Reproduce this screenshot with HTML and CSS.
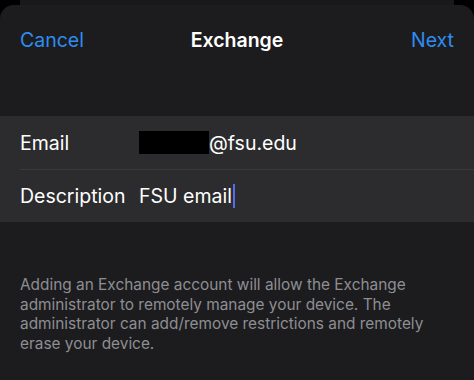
FILE: index.html
```html
<!DOCTYPE html>
<html lang="en">
<head>
    <meta charset="UTF-8">
    <meta name="viewport" content="width=device-width, initial-scale=1.0">
    <title>Exchange</title>
    <link rel="stylesheet" href="styles.css">
</head>
<body>

    <div class="behind"></div>

    <div class="sheet">
        <!-- Nav bar -->
        <div class="nav">
            <a href="#" class="nav-btn">Cancel</a>
            <h1 class="nav-title">Exchange</h1>
            <a href="#" class="nav-btn">Next</a>
        </div>

        <!-- Account fields -->
        <div class="group">
            <div class="row">
                <span class="label">Email</span>
                <span class="value"><span class="redacted"></span>@fsu.edu</span>
            </div>
            <div class="row">
                <span class="label">Description</span>
                <span class="value">FSU email<span class="cursor"></span></span>
            </div>
        </div>

        <p class="footer-note">Adding an Exchange account will allow the Exchange administrator to remotely manage your device. The administrator can add/remove restrictions and remotely erase your device.</p>
    </div>

</body>
</html>
```

FILE: styles.css
```css
* {
    margin: 0;
    padding: 0;
    box-sizing: border-box;
    font-family: 'Inter', 'Liberation Sans', sans-serif;
}
body {
    width: 474px;
    height: 380px;
    overflow: hidden;
    background: #000;
    color: #fff;
}

.behind {
    height: 5px;
    margin: 0 20px;
    background: #19191b;
}

.sheet {
    height: 375px;
    background: #1c1c1e;
    border-radius: 14px 14px 0 0;
}

.nav {
    height: 70px;
    padding: 0 20px;
    display: flex;
    justify-content: space-between;
    align-items: center;
}
.nav-btn {
    color: #2f8cf0;
    text-decoration: none;
    font-size: 19.5px;
    width: 80px;
}
.nav-btn:last-child {
    text-align: right;
}
.nav-title {
    font-size: 19.5px;
    font-weight: 600;
}

.group {
    margin-top: 41px;
    background: #2c2c2e;
}
.row {
    height: 53px;
    margin-left: 20px;
    display: flex;
    align-items: center;
    font-size: 19.5px;
}
.row + .row {
    border-top: 1px solid #3a3a3c;
}
.label {
    width: 119px;
}
.value {
    display: flex;
    align-items: center;
}
.redacted {
    display: inline-block;
    width: 70px;
    height: 23px;
    background: #000;
}
.cursor {
    display: inline-block;
    width: 2px;
    height: 24px;
    margin-left: 1px;
    background: #4f6ef5;
}

.footer-note {
    margin-top: 53px;
    padding: 0 20px;
    font-size: 15.4px;
    line-height: 19.7px;
    color: #8e8e93;
}
```
